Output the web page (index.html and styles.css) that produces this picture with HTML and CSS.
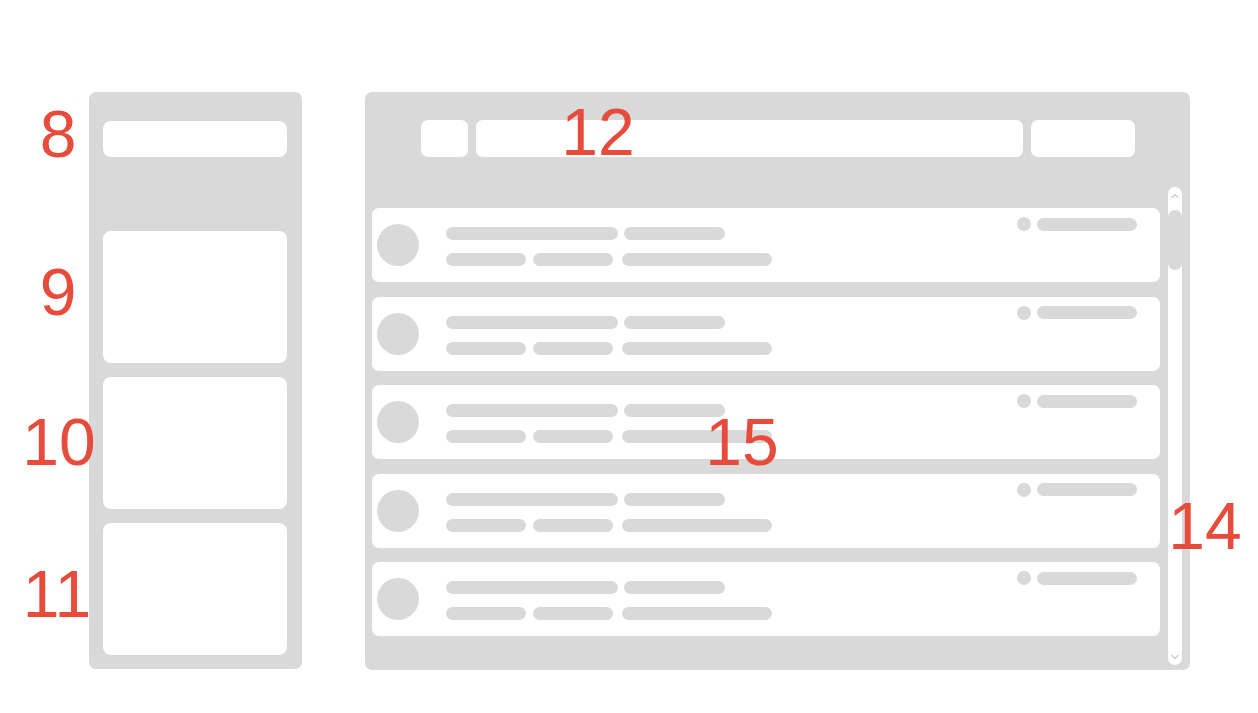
FILE: index.html
```html
<!DOCTYPE html>
<html>
<head>
<meta charset="utf-8">
<link rel="stylesheet" href="styles.css">
</head>
<body>
<div class="page">
  <aside class="side">
    <div class="side-search"></div>
    <div class="side-cards">
      <div class="side-card"></div>
      <div class="side-card"></div>
      <div class="side-card"></div>
    </div>
  </aside>
  <main class="main">
    <div class="toolbar">
      <div class="tb-btn"></div>
      <div class="tb-search"></div>
      <div class="tb-action"></div>
    </div>
    <div class="body">
      <div class="list">
        <div class="row">
          <div class="avatar"></div>
          <div class="lines">
            <div class="line"><span class="bar w172"></span><span class="bar w101"></span></div>
            <div class="line"><span class="bar w80"></span><span class="bar w80"></span><span class="bar w150"></span></div>
          </div>
          <div class="meta"><span class="dot"></span><span class="bar w100"></span></div>
        </div>
        <div class="row">
          <div class="avatar"></div>
          <div class="lines">
            <div class="line"><span class="bar w172"></span><span class="bar w101"></span></div>
            <div class="line"><span class="bar w80"></span><span class="bar w80"></span><span class="bar w150"></span></div>
          </div>
          <div class="meta"><span class="dot"></span><span class="bar w100"></span></div>
        </div>
        <div class="row">
          <div class="avatar"></div>
          <div class="lines">
            <div class="line"><span class="bar w172"></span><span class="bar w101"></span></div>
            <div class="line"><span class="bar w80"></span><span class="bar w80"></span><span class="bar w150"></span></div>
          </div>
          <div class="meta"><span class="dot"></span><span class="bar w100"></span></div>
        </div>
        <div class="row">
          <div class="avatar"></div>
          <div class="lines">
            <div class="line"><span class="bar w172"></span><span class="bar w101"></span></div>
            <div class="line"><span class="bar w80"></span><span class="bar w80"></span><span class="bar w150"></span></div>
          </div>
          <div class="meta"><span class="dot"></span><span class="bar w100"></span></div>
        </div>
        <div class="row">
          <div class="avatar"></div>
          <div class="lines">
            <div class="line"><span class="bar w172"></span><span class="bar w101"></span></div>
            <div class="line"><span class="bar w80"></span><span class="bar w80"></span><span class="bar w150"></span></div>
          </div>
          <div class="meta"><span class="dot"></span><span class="bar w100"></span></div>
        </div>
      </div>
      <div class="scroll">
        <svg class="chev" width="14" height="10" viewBox="0 0 14 10"><path d="M4 6.5 L7 3.5 L10 6.5" fill="none" stroke="#cccccc" stroke-width="1.4" stroke-linecap="round" stroke-linejoin="round"/></svg>
        <div class="thumb"></div>
        <div class="track-fill"></div>
        <svg class="chev" width="14" height="10" viewBox="0 0 14 10"><path d="M4 3.5 L7 6.5 L10 3.5" fill="none" stroke="#cccccc" stroke-width="1.4" stroke-linecap="round" stroke-linejoin="round"/></svg>
      </div>
    </div>
  </main>
</div>

<div class="label l8">8</div>
<div class="label l9">9</div>
<div class="label l10">10</div>
<div class="label l11">11</div>
<div class="label l12">12</div>
<div class="label l15">15</div>
<div class="label l14">14</div>
</body>
</html>
```
FILE: styles.css
```css
html, body {
  margin: 0;
  padding: 0;
  background: #ffffff;
  font-family: "Liberation Sans", Arial, sans-serif;
}

body {
  width: 1258px;
  height: 713px;
  position: relative;
  overflow: hidden;
}

.page {
  display: flex;
  align-items: flex-start;
  gap: 63px;
  padding: 92px 0 0 89px;
}

/* Left sidebar */
.side {
  width: 213px;
  height: 577px;
  box-sizing: border-box;
  background: #d9d9d9;
  border-radius: 7px;
  padding: 29px 15px 13px 14px;
  display: flex;
  flex-direction: column;
}

.side-search {
  height: 36px;
  background: #ffffff;
  border-radius: 8px;
}

.side-cards {
  margin-top: 74px;
  display: flex;
  flex-direction: column;
  gap: 14px;
}

.side-card {
  height: 132px;
  background: #ffffff;
  border-radius: 8px;
}

/* Main panel */
.main {
  width: 825px;
  height: 578px;
  box-sizing: border-box;
  background: #d9d9d9;
  border-radius: 7px;
  display: flex;
  flex-direction: column;
}

.toolbar {
  display: flex;
  gap: 8px;
  padding: 28px 55px 0 56px;
  height: 37px;
}

.tb-btn {
  width: 47px;
  background: #ffffff;
  border-radius: 7px;
}

.tb-search {
  flex: 1;
  background: #ffffff;
  border-radius: 7px;
}

.tb-action {
  width: 104px;
  background: #ffffff;
  border-radius: 7px;
}

.body {
  margin-top: 30px;
  display: flex;
  gap: 8px;
  padding: 0 8px 5px 7px;
  height: 478px;
}

.list {
  flex: 1;
  padding-top: 21px;
  display: flex;
  flex-direction: column;
  gap: 14.5px;
}

.row {
  height: 74px;
  background: #ffffff;
  border-radius: 7px;
  display: flex;
  align-items: flex-start;
  padding: 0 23px 0 5px;
  box-sizing: border-box;
}

.avatar {
  width: 42px;
  height: 42px;
  border-radius: 50%;
  background: #d9d9d9;
  margin-top: 16px;
  flex-shrink: 0;
}

.lines {
  margin-left: 27px;
  margin-top: 19px;
  display: flex;
  flex-direction: column;
  gap: 13px;
  flex: 1;
}

.line {
  display: flex;
  gap: 6px;
}

.line + .line .bar + .bar { margin-left: 1px; }
.line + .line .bar:last-child { margin-left: 3px; }

.bar {
  display: block;
  height: 13px;
  border-radius: 7px;
  background: #d9d9d9;
}

.w172 { width: 172px; }
.w101 { width: 101px; }
.w80 { width: 80px; }
.w150 { width: 150px; }
.w100 { width: 100px; }

.meta {
  margin-top: 9px;
  display: flex;
  gap: 6px;
  align-items: center;
}

.dot {
  display: block;
  width: 14px;
  height: 14px;
  border-radius: 50%;
  background: #d9d9d9;
}

/* Scrollbar */
.scroll {
  width: 14px;
  background: #ffffff;
  border-radius: 7px;
  display: flex;
  flex-direction: column;
  align-items: center;
  padding: 4px 0 3px;
  box-sizing: border-box;
}

.chev {
  display: block;
  flex-shrink: 0;
}

.thumb {
  width: 14px;
  height: 60px;
  border-radius: 7px;
  background: #d9d9d9;
  margin-top: 9px;
}

.track-fill {
  flex: 1;
}

/* Annotation labels */
.label {
  position: absolute;
  width: 100px;
  text-align: center;
  font-family: "Liberation Sans", Arial, sans-serif;
  font-size: 66px;
  line-height: 66px;
  color: #e64b3b;
}

.l8  { left: 8px;  top: 101px; }
.l9  { left: 8px;  top: 259px; }
.l10 { left: 9px;  top: 409px; }
.l11 { left: 7px;  top: 561px; }
.l12 { left: 548px; top: 99px; }
.l15 { left: 692px; top: 409px; }
.l14 { left: 1155px; top: 493px; }
```
